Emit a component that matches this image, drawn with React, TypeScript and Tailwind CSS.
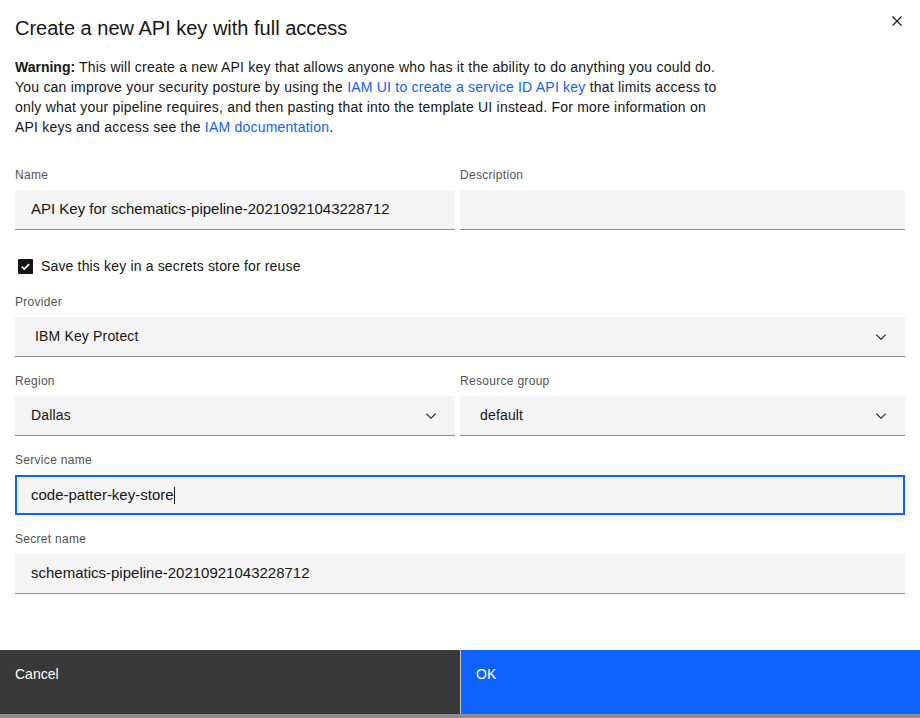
import React from 'react';

const Chevron: React.FC = () => (
  <svg width="16" height="16" viewBox="0 0 16 16" className="shrink-0 fill-[#161616]">
    <path d="M8 11L3 6 3.7 5.3 8 9.6 12.3 5.3 13 6z" />
  </svg>
);

const Label: React.FC<{ text: string }> = ({ text }) => (
  <div className="h-4 mb-[7px] text-[12px] leading-4 tracking-[0.3px] text-[#525252]">{text}</div>
);

const TextField: React.FC<{ label: string; value?: string }> = ({ label, value }) => (
  <div>
    <Label text={label} />
    <div className="h-10 bg-[#f4f4f4] border-b border-[#8d8d8d] px-4 flex items-center text-[15px] text-[#161616]">
      {value}
    </div>
  </div>
);

const SelectField: React.FC<{ label: string; value: string; pad?: string }> = ({ label, value, pad = 'pl-4' }) => (
  <div>
    <Label text={label} />
    <div className={`h-10 bg-[#f4f4f4] border-b border-[#8d8d8d] ${pad} pr-4 flex items-center justify-between text-[14px] tracking-[0.16px] text-[#161616]`}>
      <span>{value}</span>
      <Chevron />
    </div>
  </div>
);

export default function App() {
  return (
    <div
      className="w-[920px] h-[718px] bg-white flex flex-col text-[#161616] overflow-hidden"
      style={{ fontFamily: '"Liberation Sans", Arial, sans-serif' }}
    >
      <div className="relative pt-[14px] px-[15px]">
        <h2 className="text-[20px] leading-[28px] font-normal">Create a new API key with full access</h2>
        <button className="absolute top-[11px] right-[13px] w-5 h-5 flex items-center justify-center">
          <svg width="20" height="20" viewBox="0 0 16 16" className="fill-[#161616]">
            <path d="M12 4.7L11.3 4 8 7.3 4.7 4 4 4.7 7.3 8 4 11.3 4.7 12 8 8.7 11.3 12 12 11.3 8.7 8z" />
          </svg>
        </button>
      </div>

      <div className="px-[15px]">
        <p className="mt-[15px] text-[14px] leading-5 tracking-[0.22px]">
          <strong className="font-bold tracking-normal">Warning:</strong> This will create a new API key that allows anyone who has it the ability to do anything you could do.
          <br />
          You can improve your security posture by using the{' '}
          <a className="text-[#0f62fe]">IAM UI to create a service ID API key</a> that limits access to
          <br />
          only what your pipeline requires, and then pasting that into the template UI instead. For more information on
          <br />
          API keys and access see the <a className="text-[#0f62fe]">IAM documentation</a>.
        </p>

        <div className="mt-[30px] grid grid-cols-[440px_1fr] gap-[5px]">
          <TextField label="Name" value="API Key for schematics-pipeline-20210921043228712" />
          <TextField label="Description" />
        </div>

        <div className="mt-[28px] h-4 flex items-center gap-2 pl-[3px]">
          <span className="w-[15px] h-[15px] rounded-[1px] bg-[#161616] flex items-center justify-center">
            <svg width="11" height="11" viewBox="0 0 12 12" fill="none" stroke="white" strokeWidth="1.8">
              <path d="M2 6.2l2.6 2.6L10 3.4" />
            </svg>
          </span>
          <span className="text-[14px] tracking-[0.16px]">Save this key in a secrets store for reuse</span>
        </div>

        <div className="mt-[20px]">
          <SelectField label="Provider" value="IBM Key Protect" pad="pl-5" />
        </div>

        <div className="mt-4 grid grid-cols-[440px_1fr] gap-[5px]">
          <SelectField label="Region" value="Dallas" />
          <SelectField label="Resource group" value="default" pad="pl-5" />
        </div>

        <div className="mt-4">
          <Label text="Service name" />
          <div className="h-10 bg-[#f4f4f4] border-2 border-[#0f62fe] px-[14px] flex items-center text-[15px]">
            <span>code-patter-key-store</span>
            <span className="w-px h-[17px] bg-[#161616]" />
          </div>
        </div>

        <div className="mt-4">
          <TextField label="Secret name" value="schematics-pipeline-20210921043228712" />
        </div>
      </div>

      <div className="flex-1" />

      <div className="h-16 flex text-[14px] text-white">
        <button className="w-[461px] h-full bg-[#393939] border-r border-[#c6c6c6] text-left px-[15px] pt-[14px] flex items-start">
          Cancel
        </button>
        <button className="flex-1 h-full bg-[#0f62fe] text-left px-[15px] pt-[14px] flex items-start">OK</button>
      </div>
      <div className="h-1 bg-[#8d8d8d]" />
    </div>
  );
}
